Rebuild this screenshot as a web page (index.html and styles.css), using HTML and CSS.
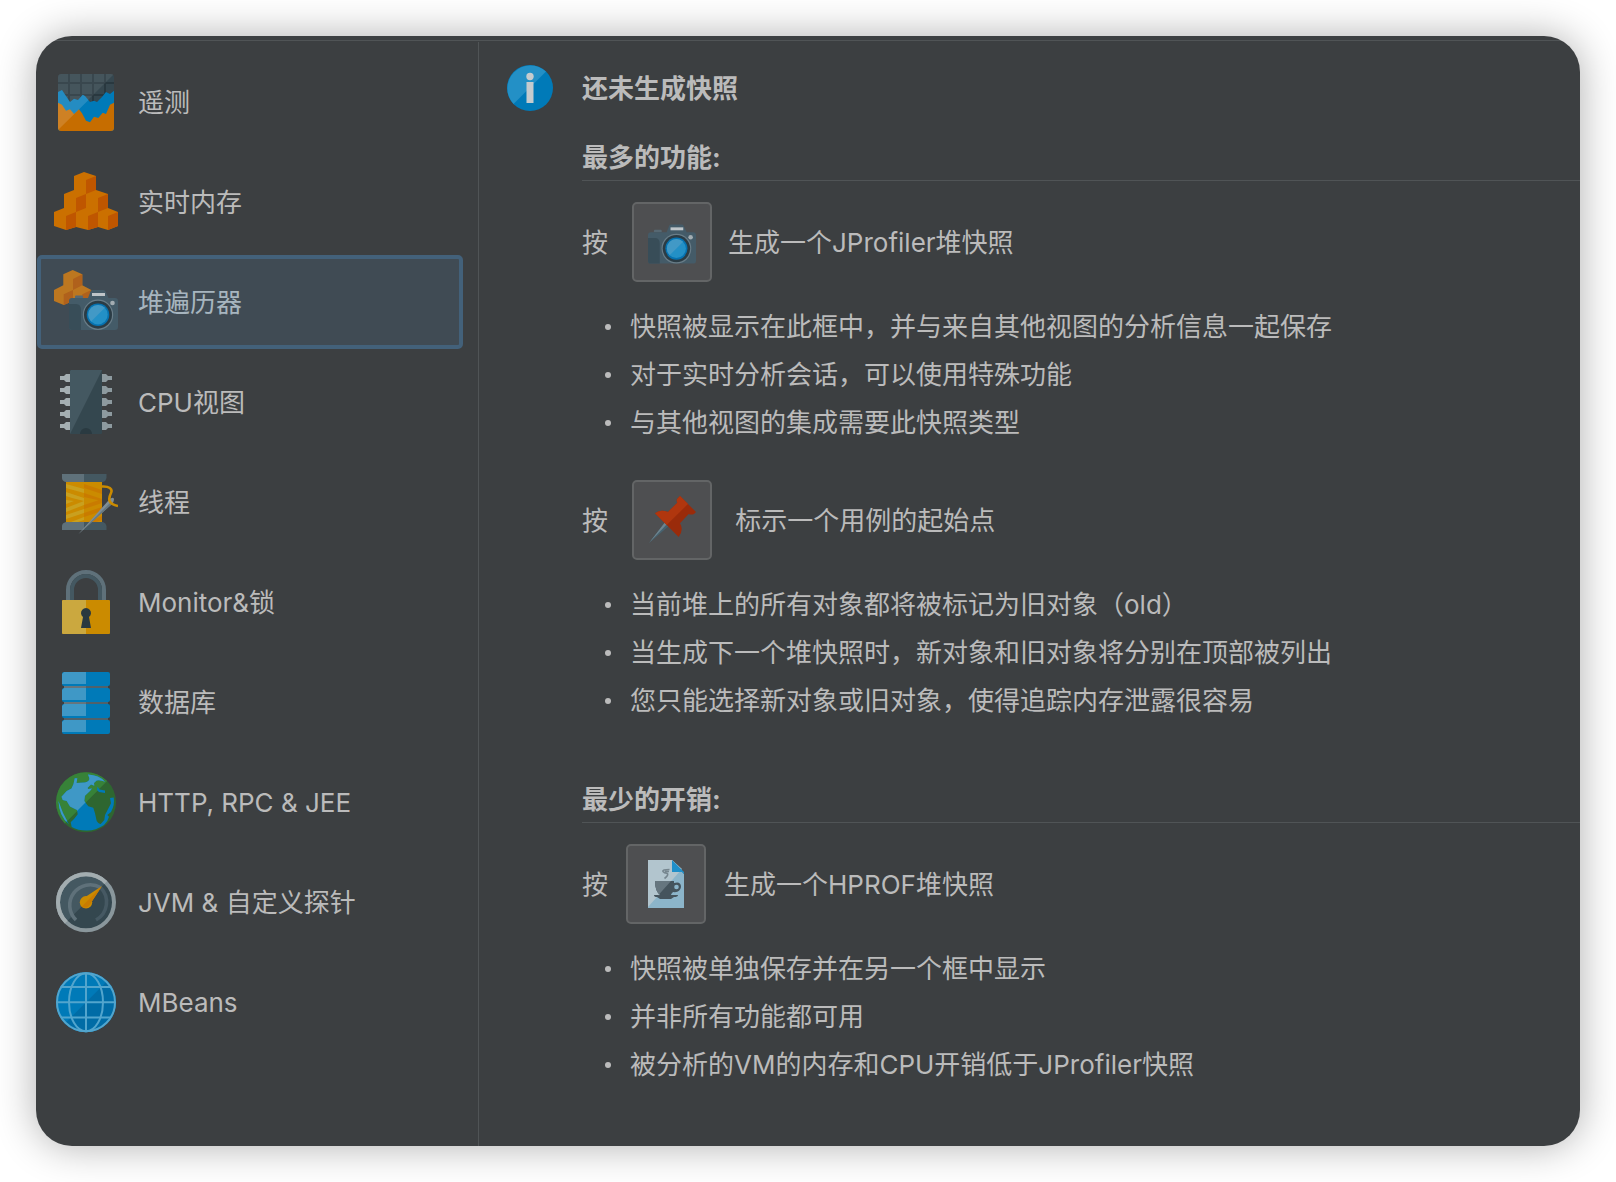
FILE: index.html
```html
<!DOCTYPE html>
<html lang="zh-CN">
<head>
    <meta charset="UTF-8">
    <meta name="viewport" content="width=device-width, initial-scale=1.0">
    <title>JProfiler - 堆遍历器</title>
    <link rel="stylesheet" href="styles.css">
</head>
<body>

<!-- Shared camera drawing -->
<svg class="defs" width="0" height="0" aria-hidden="true">
    <symbol id="camera" viewBox="0 0 49 40">
        <path d="M6 8V6.500Q6 5.500 7 5.500H13Q14 5.500 14 6.500V8Z" fill="#566873"/>
        <path d="M3 8H19L21.500 1.500Q22 0 23.500 0H34.500Q36 0 36.500 1.500L39.500 8H46Q49 8 49 11V37Q49 40 46 40H3Q0 40 0 37V11Q0 8 3 8Z" fill="#445b68"/>
        <path d="M0 14H7Q12 14 12 20V40H3Q0 40 0 37Z" fill="#384d58"/>
        <rect x="23" y="3" width="13" height="3" fill="#bfc5c9"/>
        <circle cx="29" cy="24.700" r="15.200" fill="#697d88"/>
        <circle cx="29" cy="24.700" r="14" fill="#2b3c45"/>
        <circle cx="29" cy="24.700" r="11.300" fill="#0672b0"/>
        <circle cx="29" cy="24.700" r="9.700" fill="#2390c6"/>
        <path d="M22.100 31.600A9.700 9.700 0 0 1 35.900 17.800Z" fill="#4299c6"/>
        <circle cx="43.500" cy="13" r="2.300" fill="#a3adb2"/>
    </symbol>
</svg>

<div class="window">
    <nav class="sidebar">
        <a class="nav-item" href="#telemetry">
            <svg class="nav-icon" viewBox="0 0 64 64">
                <clipPath id="chartClip"><rect x="4" y="4" width="56" height="57" rx="3"/></clipPath>
                <g clip-path="url(#chartClip)">
                    <rect x="4" y="4" width="56" height="57" fill="#36474f"/>
                    <path d="M15 4V40M27 4V40M39 4V40M51 4V40M4 13H60M4 25H60" stroke="#29383f" stroke-width="2"/>
                    <path d="M4 4H60L4 60Z" fill="#fff" opacity=".08"/>
                    <path d="M4 22L8 20L12 26L16 32L20 28.700L24 30L28.700 24.700L31 26L36 32L40 30.700L43 32L48 27L52 22L56 24L60 20.700V61H4Z" fill="#007ab8"/>
                    <path d="M4 32.700L8 34.700L12 40.700L16 39.300L20 44L25 39.300L28 43.300L32 50.700L36 52.300L40 46.700L44.300 48L48.700 42.700L52 44L56 34.700L60 32.700V61H4Z" fill="#c66d00"/>
                    <path d="M4 22L8 20L12 26L16 32L20 28.700L24 30L28.700 24.700L31 26L34.500 30L4 60Z" fill="#fff" opacity=".14"/>
                </g>
            </svg>
            <span>遥测</span>
        </a>
        <a class="nav-item" href="#memory">
            <svg class="nav-icon" viewBox="0 0 64 64">
                <path d="M0 42L10 38V24L20 20V6L30 2L42 6V20L54 24V38L64 42V56L54 60L44 57L34 60L22 57L12 60L0 56Z" fill="#cb7000"/>
                <path d="M32 10L42 6V20L32 24ZM22 28L32 24V38L22 42ZM44 28L54 24V38L44 42ZM12 46L22 42V57L12 60ZM34 46L44 42V57L34 60ZM54 46L64 42V56L54 60Z" fill="#bf5600"/>
            </svg>
            <span>实时内存</span>
        </a>
        <a class="nav-item active" href="#heap" aria-current="page">
            <svg class="nav-icon" viewBox="0 0 64 64">
                <path d="M0 20L9.300 15.300V4.300L18.700 0L28.300 4.300V15.300L37.300 20V31L28 35L19 31L9.700 35L0 31Z" fill="#bd7720"/>
                <path d="M19 9L28.300 4.300V15.300L19 20ZM9.700 24.300L19 20V31L9.700 35ZM28.300 24.300L37.300 20V31L28 35Z" fill="#b0611c"/>
                <use href="#camera" x="15" y="20" width="49" height="40"/>
            </svg>
            <span>堆遍历器</span>
        </a>
        <a class="nav-item" href="#cpu">
            <svg class="nav-icon" viewBox="0 0 64 64">
                <path d="M6 6H10L12 4H16V12H12L10 10H6ZM6 18H10L12 16H16V24H12L10 22H6ZM6 30H10L12 28H16V36H12L10 34H6ZM6 42H10L12 40H16V48H12L10 46H6ZM6 54H10L12 52H16V60H12L10 58H6Z" fill="#a5afb2"/>
                <path d="M58 6H54L52 4H48V12H52L54 10H58ZM58 18H54L52 16H48V24H52L54 22H58ZM58 30H54L52 28H48V36H52L54 34H58ZM58 42H54L52 40H48V48H52L54 46H58ZM58 54H54L52 52H48V60H52L54 58H58Z" fill="#8d9a9f"/>
                <rect x="16" y="0" width="32" height="64" rx="1" fill="#34474f"/>
                <path d="M17 0H48L16 64V1Z" fill="#445861"/>
                <path d="M26 64A6 6 0 0 1 38 64Z" fill="#2a3a41"/>
            </svg>
            <span>CPU视图</span>
        </a>
        <a class="nav-item" href="#threads">
            <svg class="nav-icon" viewBox="0 0 64 64">
                <path d="M8 4H30V12H12Q8 11 8 8ZM8 60H30V52H12Q8 53 8 56Z" fill="#5f717a"/>
                <path d="M30 4H52.500V8Q52 11 49 12H30ZM30 60H52.500V56Q52 53 49 52H30Z" fill="#445861"/>
                <rect x="12" y="12" width="36" height="40" fill="#cb8b00"/>
                <path d="M12 14L30 19V23L12 18ZM12 22L30 28V31L18 28L12 26ZM12 30L20 31L12 34ZM12 38L30 31V35L12 42ZM12 45L30 39V43L12 49ZM17 52L30 47V50L24 52Z" fill="#c9a01f"/>
                <path d="M30 14L48 20V24L30 18ZM30 23L48 29V31L30 27ZM30 35L48 29V33L30 39ZM30 43L48 37V41L30 47ZM34 52L48 46V50L42 52Z" fill="#c97b00"/>
                <path d="M24.500 64L54 31Q57 27 59.500 28Q61 30 58 34Z" fill="#7f8e96"/>
                <path d="M24.500 64L56 33L58 34Z" fill="#65777f"/>
                <path d="M48 16.500C55 16 59 19 57 23C54 29 54 34 64 36" fill="none" stroke="#cb8b00" stroke-width="2.600"/>
            </svg>
            <span>线程</span>
        </a>
        <a class="nav-item" href="#monitors">
            <svg class="nav-icon" viewBox="0 0 64 64">
                <path d="M14 31V20A18 18 0 0 1 50 20V31" fill="none" stroke="#5f717a" stroke-width="4"/>
                <path d="M18 31V20A14 14 0 0 1 46 20V31" fill="none" stroke="#445861" stroke-width="4"/>
                <rect x="8" y="30" width="48" height="34" rx="1" fill="#cb8b00"/>
                <path d="M32 30H9L8 31V63L9 64H32Z" fill="#cba83f"/>
                <path d="M29 47A5 5 0 1 1 35 47L37 58H27Z" fill="#29383f"/>
            </svg>
            <span>Monitor&amp;锁</span>
        </a>
        <a class="nav-item" href="#databases">
            <svg class="nav-icon" viewBox="0 0 64 64">
                <rect x="10" y="14" width="44" height="40" fill="#50616a"/>
                <g fill="#007ab8">
                    <rect x="8" y="2" width="48" height="14" rx="2"/>
                    <rect x="8" y="18" width="48" height="14" rx="2"/>
                    <rect x="8" y="34" width="48" height="14" rx="2"/>
                    <rect x="8" y="50" width="48" height="14" rx="2"/>
                </g>
                <path d="M10 2H32V14H8V4ZM10 18H32V30H8V20ZM10 34H32V46H8V36ZM10 50H32V62H8V52Z" fill="#3f98c6"/>
                <path d="M10 16H32V18H10ZM10 32H32V34H10Z" fill="#66757d"/>
            </svg>
            <span>数据库</span>
        </a>
        <a class="nav-item" href="#http">
            <svg class="nav-icon" viewBox="0 0 64 64">
                <clipPath id="earthLight"><path d="M0 0H64L0 64Z"/></clipPath>
                <circle cx="32" cy="32.300" r="30" fill="#2e6630"/>
                <path d="M53.200 11A30 30 0 0 0 10.800 53.500Z" fill="#378238"/>
                <path d="M20.700 8.300H23.300L22.500 13L31 12.500Q36 11 35.300 8L34 4.500Q45 5 51 11.700Q46 9.500 42.700 10.500L40 13L40.300 15.700L37 14.500L33.700 17.700L34 19L38 18.500L36 21L31 25.700L30.300 31L34.300 36.300L39.300 37.700L41 43.300L42.700 51Q45 54.500 46.700 54L50.300 50L51 45L57 33.300L56 28L59.700 27.500Q61 35 57 42L53.300 45L55 46.700Q54 51 50 55Q41 61 32 60.500Q24 60.500 17.700 57L16.700 52.300L20 49L23.700 44.300L23 40L16 36.500L12.700 31L8.700 30L7.500 26.700L12.700 21L17.500 18.500L19.500 14ZM4.500 31Q7 38 9 43L15 54.500Q5 46 4.500 31ZM43.500 16.500L45.500 19.500L51 20.500V23L45 22L43 20Z" fill="#007ab8"/>
                <g clip-path="url(#earthLight)" fill="#3f98c6">
                    <path d="M20.700 8.300H23.300L22.500 13L31 12.500Q36 11 35.300 8L34 4.500Q45 5 51 11.700Q46 9.500 42.700 10.500L40 13L40.300 15.700L37 14.500L33.700 17.700L34 19L38 18.500L36 21L31 25.700L30.300 31L34.300 36.300L23.700 44.300L23 40L16 36.500L12.700 31L8.700 30L7.500 26.700L12.700 21L17.500 18.500L19.500 14ZM4.500 31Q7 38 9 43L15 54.500Q5 46 4.500 31Z"/>
                </g>
            </svg>
            <span>HTTP, RPC &amp; JEE</span>
        </a>
        <a class="nav-item" href="#probes">
            <svg class="nav-icon" viewBox="0 0 64 64">
                <circle cx="32" cy="32.300" r="28" fill="#445861"/>
                <path d="M51.800 12.500A28 28 0 0 1 12.200 52.100Z" fill="#34474f"/>
                <circle cx="32" cy="32.300" r="28" fill="none" stroke="#8a979c" stroke-width="4"/>
                <path d="M12.200 52.100A28 28 0 0 1 51.800 12.500" fill="none" stroke="#a3adb0" stroke-width="4"/>
                <path d="M22 50A20.500 20.500 0 0 1 46.500 17.500" fill="none" stroke="#5f717a" stroke-width="3.600"/>
                <path d="M46.500 17.500A20.500 20.500 0 0 1 42 50" fill="none" stroke="#465963" stroke-width="3.600"/>
                <circle cx="32" cy="32.300" r="6.200" fill="#cb8b00"/>
                <path d="M48 16L36.500 33.500L30.500 27.500Z" fill="#cb8b00"/>
                <path d="M48 16L36.500 33.500A6.200 6.200 0 0 1 27.600 36.700Z" fill="#c97b00"/>
            </svg>
            <span>JVM &amp; 自定义探针</span>
        </a>
        <a class="nav-item" href="#mbeans">
            <svg class="nav-icon" viewBox="0 0 64 64">
                <circle cx="32" cy="32.300" r="30" fill="#007ab8"/>
                <path d="M53.200 11.100A30 30 0 0 1 10.800 53.500Z" fill="#006ca6"/>
                <g fill="none" stroke="#52a5cd" stroke-width="2">
                    <circle cx="32" cy="32.300" r="29"/>
                    <ellipse cx="32" cy="32.300" rx="17" ry="29"/>
                    <path d="M32 3V61M3 32.300H61M7 17H57M7 47.500H57"/>
                </g>
            </svg>
            <span>MBeans</span>
        </a>
    </nav>

    <main class="content">
        <div class="notice">
            <svg class="info-icon" viewBox="0 0 46 46">
                <circle cx="23" cy="23" r="23" fill="#007ab8"/>
                <path d="M6.500 39A23 23 0 0 1 39 6.500Z" fill="#2390c6"/>
                <circle cx="23" cy="11.500" r="3.700" fill="#c5cbce"/>
                <rect x="19.500" y="17" width="7" height="21" fill="#c5cbce"/>
            </svg>
            <h1>还未生成快照</h1>
        </div>

        <section>
            <h2>最多的功能:</h2>
            <div class="step">
                <span class="press">按</span>
                <button type="button" class="tool-button" aria-label="堆快照">
                    <svg viewBox="0 0 48 48"><use href="#camera" x="0" y="6" width="48" height="40"/></svg>
                </button>
                <span>生成一个JProfiler堆快照</span>
            </div>
            <ul>
                <li>快照被显示在此框中，并与来自其他视图的分析信息一起保存</li>
                <li>对于实时分析会话，可以使用特殊功能</li>
                <li>与其他视图的集成需要此快照类型</li>
            </ul>
            <div class="step">
                <span class="press">按</span>
                <button type="button" class="tool-button" aria-label="标示">
                    <svg viewBox="0 0 48 48">
                        <path d="M18 25L22 29L1 47Z" fill="#46626f"/>
                        <path d="M18 25L20 27L1 47Z" fill="#6d848f"/>
                        <path d="M32 0L48 16L46 18Q43 19 40.700 18L32 27.300Q36 34 30.700 41L7 17.300Q12 13 20 16L29.300 6.700Q28 4 29.500 2.500Z" fill="#9a2b0a"/>
                        <path d="M32 0L40 8L18.700 29L7 17.300Q12 13 20 16L29.300 6.700Q28 4 29.500 2.500Z" fill="#b0360e"/>
                    </svg>
                </button>
                <span>&nbsp;标示一个用例的起始点</span>
            </div>
            <ul>
                <li>当前堆上的所有对象都将被标记为旧对象（old）</li>
                <li>当生成下一个堆快照时，新对象和旧对象将分别在顶部被列出</li>
                <li>您只能选择新对象或旧对象，使得追踪内存泄露很容易</li>
            </ul>
        </section>

        <section>
            <h2>最少的开销:</h2>
            <div class="step compact">
                <span class="press">按</span>
                <button type="button" class="tool-button" aria-label="HPROF">
                    <svg viewBox="0 0 48 48">
                        <path d="M6 0H30L42 14V48H6Z" fill="#8cb5ca"/>
                        <path d="M6 0H30L40 9L6 47Z" fill="#b2c5ce"/>
                        <path d="M30 0L42 12V14L40 12H30Z" fill="#1f8fc9"/>
                        <path d="M13 21H32V23Q39 21 39 27Q38 33 31 32Q29 34 29 35H36Q36 37 32 37L29 39H18L15 37Q12 37 12 35H18Q13 31 13 21Z" fill="#45545d"/>
                        <path d="M13 21H29L16 35.500Q17 35 18 35Q13 31 13 21Z" fill="#66767f"/>
                        <circle cx="34.500" cy="27" r="2.300" fill="#8cb5ca"/>
                        <path d="M27.500 9.500Q20 9.500 21 11.500Q22 13 25.500 13.500Q26.500 15.500 22.500 18.500M23 11.500H27" fill="none" stroke="#76868f" stroke-width="1.600"/>
                    </svg>
                </button>
                <span>生成一个HPROF堆快照</span>
            </div>
            <ul>
                <li>快照被单独保存并在另一个框中显示</li>
                <li>并非所有功能都可用</li>
                <li>被分析的VM的内存和CPU开销低于JProfiler快照</li>
            </ul>
        </section>
    </main>
</div>

</body>
</html>
```
FILE: styles.css
```css
* {
    box-sizing: border-box;
}
body {
    margin: 0;
    padding: 36px;
    background-color: #fff;
    font-family: Inter, "Noto Sans CJK SC", sans-serif;
    font-size: 26px;
    line-height: 48px;
    color: #bbb;
}
.defs {
    position: absolute;
}
.window {
    display: flex;
    padding-top: 6px;
    border-radius: 36px;
    overflow: hidden;
    /* Thin line just under the top edge */
    background: linear-gradient(#505456, #505456) 0 4px / 100% 1px no-repeat #3c3f41;
    box-shadow: 0 0 40px rgba(0, 0, 0, 0.32);
}

/* Sidebar */
.sidebar {
    flex: 0 0 443px;
    padding: 10px 15px 0 1px;
    border-right: 1px solid #505456;
}
.nav-item {
    display: flex;
    align-items: center;
    gap: 20px;
    height: 94px;
    margin: 3px 0 6px;
    padding-left: 13px;
    border: 4px solid transparent;
    border-radius: 5px;
    color: inherit;
    text-decoration: none;
}
.nav-item.active {
    background-color: #404b54;
    border-color: #43617a;
    color: #a7b5bf;
}
.nav-icon {
    width: 64px;
    height: 64px;
}
.nav-item span,
.step span {
    padding-top: 2px;
}

/* Content */
.content {
    flex: 1;
    padding: 22px 0 57px 28px;
}
.content section {
    padding-left: 75px;
}
.content section + section {
    margin-top: 50px;
}
.notice {
    display: flex;
    align-items: center;
    gap: 29px;
    margin-bottom: 21px;
}
.info-icon {
    width: 46px;
    height: 46px;
}
h1,
h2 {
    height: 48px;
    margin: 0;
    padding-top: 1px;
    font-size: 26px;
    font-weight: bold;
}
h2 {
    border-bottom: 1px solid #505456;
}
.step {
    display: flex;
    align-items: center;
    gap: 16px;
    margin-top: 21px;
}
.step .press {
    padding-right: 8px;
}
.step.compact {
    gap: 18px;
}
.step.compact .press {
    padding-right: 0;
}
.tool-button {
    display: flex;
    align-items: center;
    justify-content: center;
    width: 80px;
    height: 80px;
    padding: 0;
    background-color: #4e4f51;
    border: 2px solid #636566;
    border-radius: 5px;
    cursor: pointer;
}
.tool-button svg {
    width: 48px;
    height: 48px;
}
ul {
    margin: 21px 0 0;
    padding: 0;
    list-style: none;
}
ul + .step {
    margin-top: 33px;
}
li {
    display: flex;
    align-items: center;
    gap: 19px;
    padding-left: 23px;
}
li::before {
    content: "";
    width: 6px;
    height: 6px;
    border-radius: 50%;
    background-color: #bbb;
}
```
